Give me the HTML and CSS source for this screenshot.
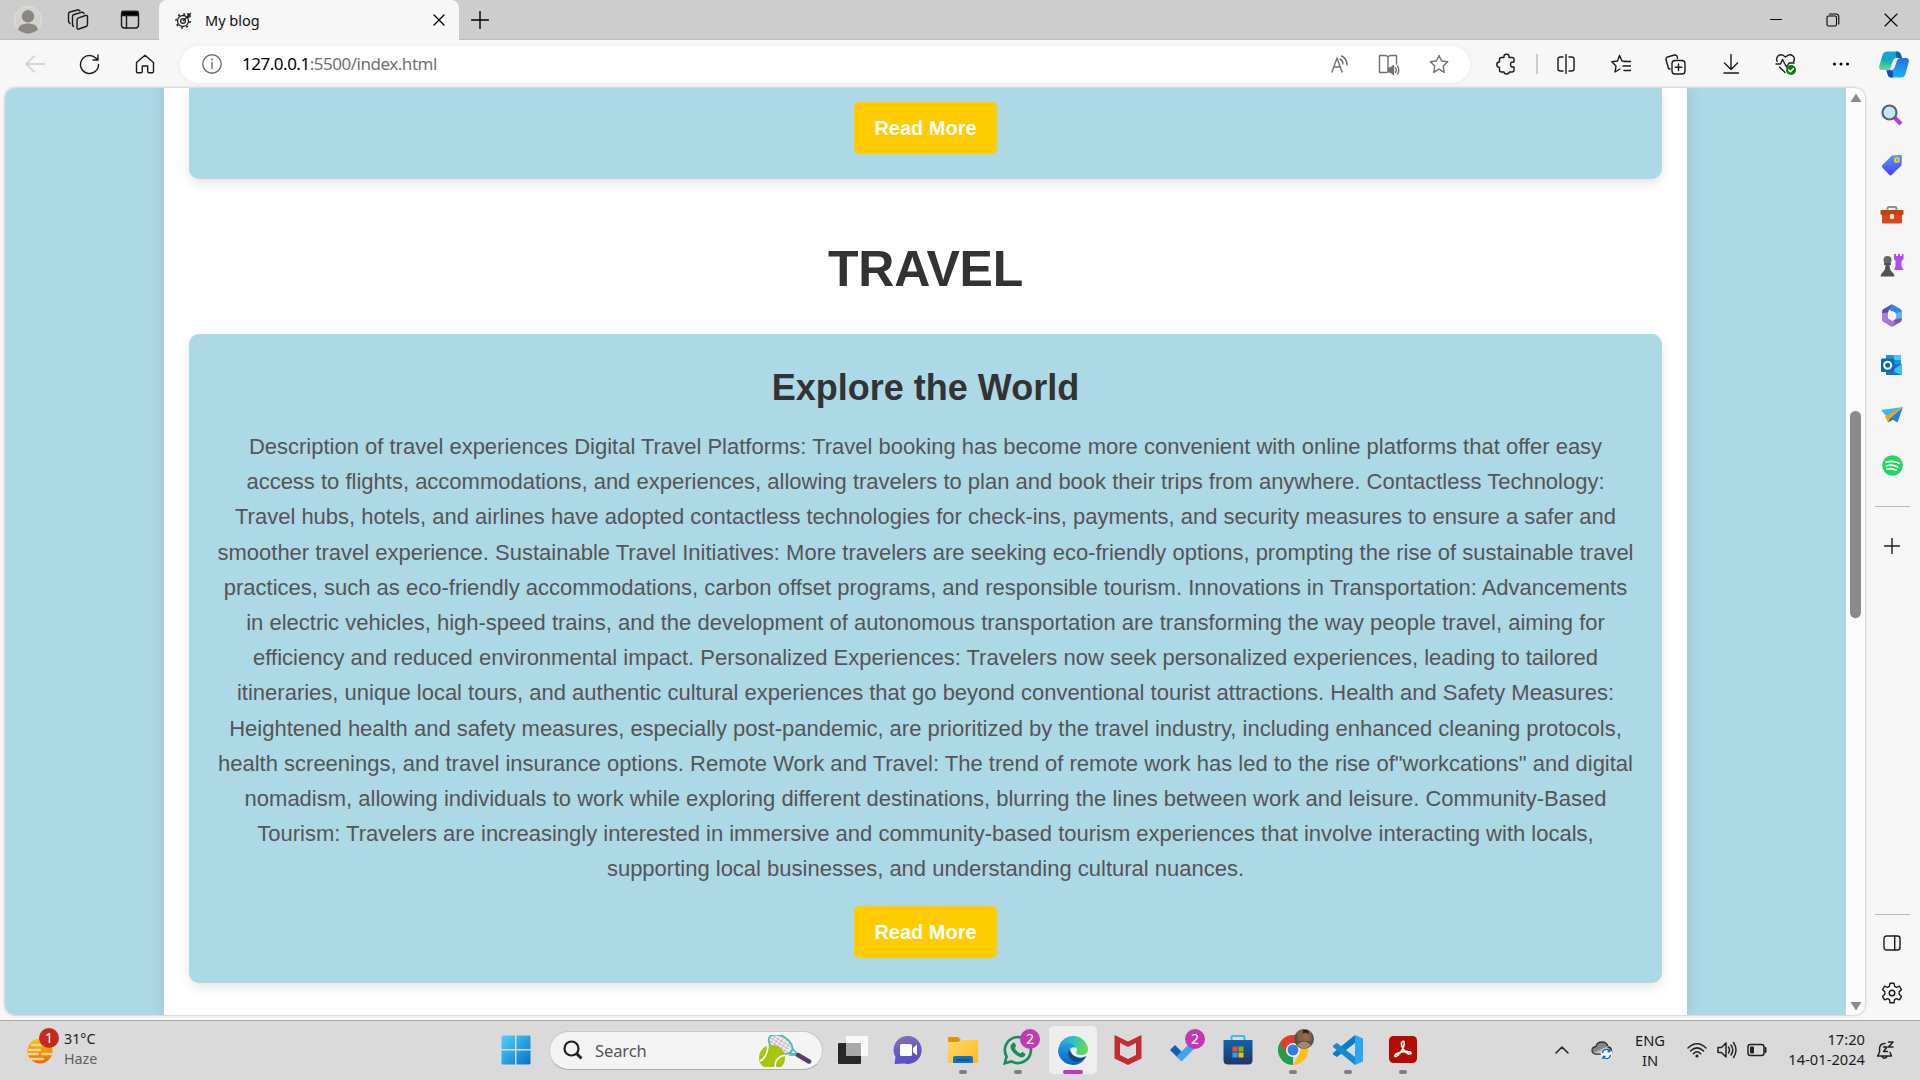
FILE: index.html
```html
<!DOCTYPE html>
<html lang="en">
<head>
<meta charset="utf-8">
<title>My blog</title>
<link rel="stylesheet" href="styles.css">
</head>
<body>
<header class="tabstrip">
  <div class="cell w56"><svg width="28" height="28" viewBox="0 0 28 28"><circle cx="14" cy="14" r="13.5" fill="#d4d1cd" stroke="#e2e0dd"/><circle cx="14" cy="10.3" r="6.2" fill="#8a8683"/><path d="M4 23.500C5 15.500 23 15.500 24 23.500 18 29 10 29 4 23.500z" fill="#8a8683"/></svg></div>
  <div class="cell w44"><svg class="line" width="22" height="22" viewBox="0 0 22 22"><path d="M11.500 8.800 18.500 6.500Q20.500 6 20.500 8V15.500Q20.500 17 19 17.500L12 20Q10 20.500 10 18.500V11Q10 9.400 11.500 8.800zM6.500 17.500 5.500 16V7.500Q5.500 6 7 5.500L14.500 3.300Q16.500 3 17 4.500M3 14.500 1.500 12.500V5Q1.500 3.500 3 3L10.500 1Q12 .8 13 2"/></svg></div>
  <div class="cell w60"><svg class="line" width="20" height="20" viewBox="0 0 20 20"><rect x="1.500" y="1.500" width="17" height="16.500" rx="3"/><path d="M2 1.500h16v4H2z" fill="#000"/><path d="M6.500 5v13"/></svg></div>
  <div class="tab">
    <svg class="favicon" width="18" height="18" viewBox="0 0 18 18" fill="none" stroke="#222"><circle cx="8" cy="10" r="5.500" stroke-width="1.300"/><circle cx="8" cy="10" r="7" stroke-width="1.600" stroke-dasharray="2 3.500"/><circle cx="8" cy="10" r="2.400" stroke-width="1.300"/><path d="M8 10 16 2M13 2v3h3" stroke-width="1.500"/></svg>
    <span class="tab-title">My blog</span>
    <svg class="line black" width="12" height="12" viewBox="0 0 12 12"><path d="M1 1 11 11M11 1 1 11"/></svg>
  </div>
  <div class="cell w42"><svg class="line black" width="18" height="18" viewBox="0 0 18 18"><path d="M9 .500V17.500M.500 9H17.500"/></svg></div>
  <div class="window-buttons">
    <svg class="line black" width="12" height="12" viewBox="0 0 12 12"><path d="M.5 5.500h11" stroke-width="1"/></svg>
    <svg class="line black" width="14" height="14" viewBox="0 0 14 14"><rect x="1" y="3" width="9.500" height="10" rx="1.500" stroke-width="1.100"/><path d="M3.500 1H10Q12.800 1 12.800 4V11" stroke-width="1.100"/></svg>
    <svg class="line black" width="14" height="14" viewBox="0 0 14 14"><path d="M1 1 13 13M13 1 1 13" stroke-width="1.100"/></svg>
  </div>
</header>

<nav class="toolbar">
  <div class="cell w55"><svg class="line pale" width="20" height="18" viewBox="0 0 20 18"><path d="M20 9H1M9.500 1 1 9 9.500 17"/></svg></div>
  <div class="cell w55"><svg class="line" width="21" height="21" viewBox="0 0 21 21"><path d="M19.500 10.500A9 9 0 1 1 16.600 3.900L19 6M19 1V6H14"/></svg></div>
  <div class="cell w55"><svg class="line" width="20" height="20" viewBox="0 0 20 20"><path d="M1.500 8.500 10 1.200 18.500 8.500V17.500Q18.500 18.800 17.200 18.800H14Q12.700 18.800 12.700 17.500V12H7.300V17.500Q7.300 18.800 6 18.800H2.800Q1.500 18.800 1.500 17.500z"/></svg></div>
  <div class="address">
    <svg class="line gray" width="20" height="20" viewBox="0 0 20 20"><circle cx="10" cy="10" r="9.200"/><path d="M10 8.500V14.500M10 5V6"/></svg>
    <span class="url"><b>127.0.0.1</b>:5500/index.html</span>
    <div class="address-actions">
      <div class="cell w50"><svg class="line gray" width="20" height="20" viewBox="0 0 20 20"><path d="M3 18 8 4 13 18M4.700 13H11.300M11 5Q14 6.500 14 10M12.500 2Q18 4.500 18 11"/></svg></div>
      <div class="cell w50"><svg class="line gray" width="22" height="21" viewBox="0 0 22 21"><path d="M10 3Q9 1.500 7 1.500H1.500V18.500H8Q9.500 18.500 10 17.500V3Q11 1.500 13 1.500H18.500V10"/><path d="M10.500 14H12.500L15.500 11.500V20.500L12.500 18H10.500z" fill="#707070"/><path d="M17.500 13.500Q19 16 17.500 18.500M19.500 12Q22 16 19.500 20"/></svg></div>
      <div class="cell w50"><svg class="line gray" width="20" height="20" viewBox="0 0 20 20"><path d="M10 1.500 12.600 7 18.700 7.800 14.200 12 15.300 18.300 10 15.200 4.700 18.300 5.800 12 1.300 7.800 7.400 7z"/></svg></div>
    </div>
  </div>
  <div class="actions">
    <div class="cell w60"><svg class="line" width="20" height="22" viewBox="0 0 20 22"><path d="M5.500 4.500H8Q7.500 1.200 10.500 1.200T13 4.500H16Q18 4.500 18 6.500V9Q14.500 8.500 14.500 11.500T18 14V17Q18 19 16 19H13.500Q13 21 10.500 21T8 19H5.500Q3.500 19 3.500 17V14.500Q.800 14 .800 11.500T3.500 9V6.500Q3.500 4.500 5.500 4.500z"/></svg></div>
    <div class="divider"></div>
    <div class="cell w55"><svg class="line" width="20" height="20" viewBox="0 0 20 20"><path d="M7 3H4.500Q2 3 2 5V15Q2 17 4.500 17H7M13 3H15.500Q18 3 18 5V15Q18 17 15.500 17H13M10 .500V19.500"/></svg></div>
    <div class="cell w55"><svg class="line" width="20" height="20" viewBox="0 0 20 20"><path d="M16 7.500 11 7 8.500 1.500 6.500 7 .8 7.800 5 12 4 18 9 15M13 7.500H20M12 12H20M13 16.500H20"/></svg></div>
    <div class="cell w55"><svg class="line" width="21" height="21" viewBox="0 0 21 21"><path d="M5 15 3.500 14.500 1 5.500Q.700 3.500 2.500 3L9.500 1Q11.500.700 12.200 2.500L12.500 4.500"/><rect x="7" y="6.500" width="13" height="13.500" rx="3"/><path d="M13.500 10V16.500M10.200 13.200H16.800"/></svg></div>
    <div class="cell w55"><svg class="line" width="16" height="20" viewBox="0 0 16 20"><path d="M8 .500V15M1.500 9 8 15.500 14.500 9M1 19H15.500"/></svg></div>
    <div class="cell w55"><svg class="line" width="22" height="22" viewBox="0 0 22 22"><path d="M2.200 8.500Q.700 5.500 3 3 6.500 0 10.500 4 14.500 0 18 3 20.300 5.500 18.800 8.500M1 11H5.500L7.500 6.500 11.500 14 14 10H19M4.500 14 10 19.500"/><circle cx="16" cy="17" r="5" fill="#0f7b14" stroke="none"/><path d="M13.700 17 15.500 18.800 18.500 15.500" stroke="#fff"/></svg></div>
    <div class="cell w55"><svg width="18" height="4" viewBox="0 0 18 4"><circle cx="2.500" cy="2" r="1.500"/><circle cx="9" cy="2" r="1.500"/><circle cx="15.500" cy="2" r="1.500"/></svg></div>
    <div class="cell w52"><svg width="30" height="27" viewBox="0 0 30 27"><defs><linearGradient id="cpa" x2="0" y2="1"><stop stop-color="#12a6e6"/><stop offset=".45" stop-color="#1aa5bb"/><stop offset="1" stop-color="#6bdc8a"/></linearGradient><linearGradient id="cpb" x2="0" y2="1"><stop stop-color="#2a6fdc"/><stop offset="1" stop-color="#17b2f8"/></linearGradient></defs><path d="M8 .500H18Q21 .500 22 4L23 7H18Q14.500 7 13.500 11L11 19H3Q-.500 19 .300 15L3.500 4Q4.500.500 8 .500z" fill="url(#cpa)"/><path d="M22 26.500H12Q9.500 26.500 8.500 23L7.500 19H12Q15 19 16 15.500L18 9.500Q18.800 7 21.500 7H27Q30.500 7 29.700 11L26.500 23Q25.500 26.500 22 26.500z" fill="url(#cpb)"/><path d="M17 .500H18Q21 .500 22 4L23 7H18.500Q16 5 17 .500z" fill="#125aa8"/><path d="M13.500 26.500H12Q9.500 26.500 8.500 23L7.500 19.500H13Q15 22 13.500 26.500z" fill="#1446cf"/></svg></div>
  </div>
</nav>

<div class="workspace">
  <div class="viewport">
    <div class="page">
      <main class="container">
        <section class="card card-top"><a class="button">Read More</a></section>
        <h1>TRAVEL</h1>
        <section class="card card-travel">
          <h2>Explore the World</h2>
          <p>Description of travel experiences Digital Travel Platforms: Travel booking has become more convenient with online platforms that offer easy access to flights, accommodations, and experiences, allowing travelers to plan and book their trips from anywhere. Contactless Technology: Travel hubs, hotels, and airlines have adopted contactless technologies for check-ins, payments, and security measures to ensure a safer and smoother travel experience. Sustainable Travel Initiatives: More travelers are seeking eco-friendly options, prompting the rise of sustainable travel practices, such as eco-friendly accommodations, carbon offset programs, and responsible tourism. Innovations in Transportation: Advancements in electric vehicles, high-speed trains, and the development of autonomous transportation are transforming the way people travel, aiming for efficiency and reduced environmental impact. Personalized Experiences: Travelers now seek personalized experiences, leading to tailored itineraries, unique local tours, and authentic cultural experiences that go beyond conventional tourist attractions. Health and Safety Measures: Heightened health and safety measures, especially post-pandemic, are prioritized by the travel industry, including enhanced cleaning protocols, health screenings, and travel insurance options. Remote Work and Travel: The trend of remote work has led to the rise of"workcations" and digital nomadism, allowing individuals to work while exploring different destinations, blurring the lines between work and leisure. Community-Based Tourism: Travelers are increasingly interested in immersive and community-based tourism experiences that involve interacting with locals, supporting local businesses, and understanding cultural nuances.</p>
          <a class="button">Read More</a>
        </section>
      </main>
    </div>
    <div class="scrollbar">
      <svg width="12" height="10" viewBox="0 0 12 10"><path d="M6 .5 11.500 9H.500z" fill="#8a8a8a"/></svg>
      <div class="thumb"></div>
      <svg class="down" width="12" height="10" viewBox="0 0 12 10"><path d="M6 9.500 11.500 1H.500z" fill="#8a8a8a"/></svg>
    </div>
  </div>
  <aside class="sidebar">
    <div class="side-item"><svg width="22" height="22" viewBox="0 0 22 22"><path d="M13.500 13.500 20 20" stroke="#b83af0" stroke-width="4"/><circle cx="8.500" cy="8.500" r="7" fill="#c4e5fa" stroke="#626262" stroke-width="2.200"/></svg></div>
    <div class="side-item"><svg width="22" height="22" viewBox="0 0 22 22"><defs><linearGradient id="tg" x2="0" y2="1"><stop stop-color="#5a9cf6"/><stop offset="1" stop-color="#4a3df0"/></linearGradient></defs><path d="M11 1.500 19.500.800Q21 .800 21 2.500L20.500 11.500 10.500 21Q9.500 21.800 8.500 21L1.200 13.500Q.200 12.500 1.200 11.300z" fill="url(#tg)"/><circle cx="15.800" cy="6" r="2" fill="#8b93a8" stroke="#f9d327" stroke-width="1.700"/></svg></div>
    <div class="side-item"><svg width="24" height="20" viewBox="0 0 24 20"><path d="M7.500 6V3.500Q7.500 2 9 2H15Q16.500 2 16.500 3.500V6" fill="none" stroke="#909090" stroke-width="1.800"/><path d="M2 8H22V17Q22 18.500 20.500 18.500H3.500Q2 18.500 2 17z" fill="#d7491c"/><path d="M.500 6Q.500 5 2 5H22Q23.500 5 23.500 6V8.500Q23.500 10 22 10H2Q.500 10 .500 8.500z" fill="#c2410c"/><rect x="10" y="9" width="4" height="5" rx="1" fill="#ddd"/></svg></div>
    <div class="side-item"><svg width="24" height="24" viewBox="0 0 24 24"><path d="M14 1H16V3H18V1H20V3H22V1H23.500V6L21.500 8V13L23.500 17H14L15.500 13V8L14 6z" fill="#b84af5"/><circle cx="7.500" cy="7" r="4" fill="#666"/><path d="M4 10H11V12H9.500Q9.500 17 12 19 14.500 21 14.500 23.500H.500Q.500 21 3 19 5.500 17 5.500 12H4z" fill="#525252"/></svg></div>
    <div class="side-item"><svg width="22" height="23" viewBox="0 0 22 23"><path d="M9.500 1Q11 0 12.500 1L19 4.700Q20.800 5.700 20.800 7.500V13L14.700 9.500 7 5z" fill="#2f8be0"/><path d="M20.800 7.500V15.500Q20.800 17.300 19 18.300L14.700 20.500V9.500z" fill="#68b3e6"/><path d="M20.800 14V15.500Q20.800 17.300 19 18.300L12.500 22Q11 22.800 9.500 22L7 20.500 14.700 15z" fill="#7b5aa6"/><path d="M7 14.500 14.500 18.500 11 22.500Q10.300 22.500 9.500 22L3 18.300Q1 17.300 1 15.500V13z" fill="#aa75cf"/><path d="M9.500 1Q10.300.500 11 .500L8 5.500 7 8.500V16L1 13.500V7.500Q1 5.700 3 4.700z" fill="#554eb5"/><path d="M1 9 7 8.500V17L3 18.300Q1 17.300 1 15.500z" fill="#a97edb"/><circle cx="11" cy="11.500" r="4.200" fill="#f7f7f7"/></svg></div>
    <div class="side-item"><svg width="22" height="22" viewBox="0 0 22 22"><path d="M5 1H20V12H5z" fill="#1b96dc"/><path d="M13 1H20V6H13z" fill="#4ccaf7"/><path d="M5 10H21V21H5z" fill="#1477c4"/><path d="M21 10 10 17 21 21z" fill="#3bc2f2"/><rect y="4.500" width="13.500" height="13.500" rx="1.500" fill="#0a69bd"/><circle cx="6.700" cy="11.200" r="3.500" fill="none" stroke="#fff" stroke-width="2"/></svg></div>
    <div class="side-item"><svg width="22" height="18" viewBox="0 0 22 18"><path d="M0 4 22 1 6 11z" fill="#3fb8ee"/><path d="M22 1 16.500 16.500 9 12z" fill="#2580df"/><path d="M22 1 4 10 7 16.500 9.500 12z" fill="#f1a21d"/><path d="M9.500 12 7 16.500 12 13.500z" fill="#1561b5"/></svg></div>
    <div class="side-item"><svg width="21" height="21" viewBox="0 0 21 21"><circle cx="10.500" cy="10.500" r="10.300" fill="#1ed760"/><path d="M4 7.200Q11 5 17 8.300M4.500 10.800Q10.500 9 15.700 12M5 14Q10 12.700 14.500 15.300" fill="none" stroke="#fff" stroke-width="1.800" stroke-linecap="round"/></svg></div>
    <div class="side-rule"></div>
    <div class="side-add"><svg class="line" width="16" height="16" viewBox="0 0 16 16"><path d="M8 .500V15.500M.500 8H15.500"/></svg></div>
    <div class="side-rule push"></div>
    <div class="side-item"><svg class="line" width="18" height="16" viewBox="0 0 18 16"><rect x="1" y="1" width="16" height="14" rx="2.500"/><path d="M11.700 1V15"/></svg></div>
    <div class="side-item"><svg class="line" width="22" height="22" viewBox="0 0 22 22"><path d="M9 1.200H13L13.600 4.300 15.400 5.300 18.400 4.200 20.400 7.700 18.200 9.800V12.200L20.400 14.300 18.400 17.800 15.400 16.700 13.600 17.700 13 20.800H9L8.400 17.700 6.600 16.700 3.600 17.800 1.600 14.300 3.800 12.200V9.800L1.600 7.700 3.600 4.200 6.600 5.300 8.400 4.300z"/><circle cx="11" cy="11" r="2.800"/></svg></div>
  </aside>
</div>

<footer class="taskbar">
  <div class="weather">
    <div class="weather-icon"><svg width="30" height="28" viewBox="0 0 30 28"><defs><linearGradient id="sun" x2="0" y2="1"><stop stop-color="#ffc505"/><stop offset="1" stop-color="#e66a0c"/></linearGradient></defs><circle cx="15" cy="14" r="12.500" fill="url(#sun)"/><path d="M7 8H20M4 13H15M1 17H13M17 17H26M1 22H18" stroke="#f1d496" stroke-width="2.300" stroke-linecap="round"/></svg><span class="badge alert">1</span></div>
    <div class="weather-text"><span>31°C</span><span class="muted">Haze</span></div>
  </div>
  <div class="apps">
    <div class="app start"><svg width="30" height="30" viewBox="0 0 30 30"><defs><linearGradient id="wn" x2="1" y2="1"><stop stop-color="#4fd3fb"/><stop offset="1" stop-color="#0670ce"/></linearGradient></defs><path d="M1.500.500H14V14H.500V1.500zM15.500.500H28.500L29.500 1.500V14H15.500zM.500 15.500H14V29.500H1.500L.500 28.500zM15.500 15.500H29.500V28.500L28.500 29.500H15.500z" fill="url(#wn)"/></svg></div>
    <div class="search">
      <svg width="20" height="20" viewBox="0 0 20 20" fill="none" stroke="#222" stroke-width="2.200"><circle cx="8.500" cy="8.500" r="7"/><path d="M13.500 13.500 18.500 18.500" stroke-width="3"/></svg>
      <span>Search</span>
      <svg class="tennis" width="54" height="33" viewBox="0 0 54 33"><g transform="rotate(32 22 10)"><ellipse cx="22" cy="9" rx="13" ry="8" fill="#f3edf5" stroke="#4dbab5" stroke-width="1.800"/><path d="M13 4V14M17 2V16M21 1V17M25 1V17M29 3V15M11 6H33M10 9H34M11 12H33" stroke="#b59fba" stroke-width=".600"/></g><path d="M34 13 40 20 31 20M32 18 40 20" fill="none" stroke="#4dbab5" stroke-width="1.600"/><path d="M40 20 51 26.500" stroke="#5d3d6c" stroke-width="4.500" stroke-linecap="round"/><path d="M1 23C1 15 7 10 14 10S27 15 27 23Q27 29 23 32H6Q1 29 1 23z" fill="#a6c50e"/><path d="M2 26Q9 23 10 11M17 32Q17 22 27 20" fill="none" stroke="#fff" stroke-width="1.700"/></svg>
    </div>
    <div class="app"><svg width="30" height="30" viewBox="0 0 30 30"><rect x="0" y="8" width="23" height="21" rx="1" fill="#282828"/><rect x="8" y="1" width="22" height="20" rx="1" fill="#fff" opacity=".82"/><path d="M8 8H23V21H8z" fill="#a9a9a9"/></svg></div>
    <div class="app"><svg width="30" height="30" viewBox="0 0 30 30"><defs><linearGradient id="ch" x2=".3" y2="1"><stop stop-color="#8a70b5"/><stop offset="1" stop-color="#554fc9"/></linearGradient></defs><path d="M15 1A14 14 0 1 1 11 28.500L1.500 29 2.500 22A14 14 0 0 1 15 1z" fill="url(#ch)"/><rect x="7" y="9" width="12" height="12" rx="1.500" fill="#fff"/><path d="M20 13 24 9.500V20.500L20 17z" fill="#fff"/></svg></div>
    <div class="app running"><svg width="30" height="30" viewBox="0 0 30 30"><defs><linearGradient id="fd" x2="1" y2="1"><stop stop-color="#ffd968"/><stop offset="1" stop-color="#fbba1d"/></linearGradient></defs><path d="M0 3Q0 2 1 2H10L13 5H20V9H0z" fill="#dc9800"/><path d="M0 7H10L13 5H29Q30 5 30 6V28H0z" fill="url(#fd)"/><path d="M5 28V23Q5 21 7 21H23Q25 21 25 23V28z" fill="#0875cd"/><path d="M8.500 25H21.500" stroke="#064d90" stroke-width="1.500"/></svg></div>
    <div class="app running"><svg width="30" height="30" viewBox="0 0 30 30"><path d="M1.800 28.200 3.600 21.500A13 13 0 1 1 8.500 26.400z" fill="none" stroke="#1f8a5b" stroke-width="2.700"/><path d="M9.500 8Q11 7 12 8.500L13.200 11 11.800 13Q13.500 17 17.500 18.500L19.300 17 22 18.500Q23 19.500 21.500 21.300 18 24.500 12 19T8 10z" fill="#1f8a5b"/></svg><span class="badge app-badge">2</span></div>
    <div class="app active"><svg width="30" height="30" viewBox="0 0 30 30"><defs><linearGradient id="ea" x2="1" y2=".2"><stop stop-color="#2a9fd5"/><stop offset=".5" stop-color="#2bc1c4"/><stop offset="1" stop-color="#62da55"/></linearGradient><linearGradient id="eb" x2="0" y2="1"><stop stop-color="#1fa3e5"/><stop offset="1" stop-color="#0a62c0"/></linearGradient></defs><path d="M1 11A15 15 0 0 1 30 14Q30 20 23 20 17 20 18.500 17 20 14 17 11 12 7 1 11z" fill="url(#ea)"/><path d="M0 15Q1 8 9 8 16 8 18 13 14 11 12 14 8 21 17 26 22 28 27 24 22 30 15 30A15 15 0 0 1 0 15z" fill="url(#eb)"/><path d="M12 14Q9 17 11 22 14 27 20 27 25 26.500 28 22 29 20.500 26 22 21 24 16.500 21 12 18 12 14z" fill="#114a8b"/></svg></div>
    <div class="app"><svg width="28" height="30" viewBox="0 0 28 30"><path d="M.5 0 14 6.500 27.500 0V23.500L14 30 .500 23.500zM6 8V20L14 24 22 20V8L14 12z" fill="#c12d31" fill-rule="evenodd"/></svg></div>
    <div class="app"><svg width="30" height="30" viewBox="0 0 30 30"><path d="M2 15 7 10 15 18 10 23z" fill="#1a5bbb"/><path d="M8.500 21.500 23 7 28 12 13.500 26.500z" fill="#41a5ee"/></svg><span class="badge app-badge">2</span></div>
    <div class="app"><svg width="30" height="30" viewBox="0 0 30 30"><defs><linearGradient id="st" x2="0" y2="1"><stop stop-color="#1263b0"/><stop offset="1" stop-color="#203764"/></linearGradient></defs><path d="M8.500 6V2Q8.500 1 9.500 1H20.500Q21.500 1 21.500 2V6" fill="none" stroke="#2fc1ee" stroke-width="2"/><path d="M.500 5H29.500V25Q29.500 29.500 25 29.500H5Q.500 29.500 .500 25z" fill="url(#st)"/><path d="M9.500 11.500H14.500V16.500H9.500z" fill="#f25022"/><path d="M15.500 11.500H20.500V16.500H15.500z" fill="#7fba00"/><path d="M9.500 17.500H14.500V22.500H9.500z" fill="#22a8ee"/><path d="M15.500 17.500H20.500V22.500H15.500z" fill="#ffb900"/></svg></div>
    <div class="app running"><svg width="30" height="30" viewBox="0 0 30 30"><path d="M15 15 15 30A15 15 0 0 1 2 7.500z" fill="#269b49"/><path d="M15 15 28 7.500A15 15 0 0 1 15 30L21.500 18.500z" fill="#fbc116"/><path d="M15 8H28.300A15 15 0 0 0 2 7.500L8.900 18.500z" fill="#e33b2e"/><circle cx="15" cy="15" r="7" fill="#fff"/><circle cx="15" cy="15" r="5.500" fill="#2f7cf0"/></svg><svg class="profile" width="20" height="20" viewBox="0 0 20 20"><circle cx="10" cy="10" r="10" fill="#5e5140"/><path d="M3 3Q10-2 17 3L18 12H4z" fill="#79664d"/><ellipse cx="12" cy="7" rx="3.600" ry="5" fill="#aa6149"/><path d="M3 16Q10 9 17 16 10 23 3 16z" fill="#a08774"/><path d="M9 5Q12 2 15 6L14 1H9z" fill="#2f211c"/></svg></div>
    <div class="app running"><svg width="30" height="30" viewBox="0 0 30 30"><path d="M22 0 30 3.500V26.500L22 30z" fill="#29a6f4"/><path d="M22 0V8L4 22 0 19.500V18z" fill="#087bc9"/><path d="M0 12V10.500L4 8 22 22V30z" fill="#168ad6"/></svg></div>
    <div class="app running"><svg width="30" height="30" viewBox="0 0 30 30"><rect x="1" y="1" width="28" height="27" rx="4.500" fill="#b30b00"/><path d="M14 7Q17 4.500 16 10 15 16 8.500 21.500 5 22 8 19 15 15 22 17 25 19 20.500 19 15 16 13.500 10 13 8 14 7z" fill="none" stroke="#fff" stroke-width="1.600"/></svg></div>
  </div>
  <div class="tray">
    <div class="cell w40"><svg class="line dark" width="14" height="8" viewBox="0 0 14 8"><path d="M1 7 7 1 13 7"/></svg></div>
    <div class="cell w40"><svg width="22" height="20" viewBox="0 0 22 20"><path d="M4 14Q1 13 1 10.500 1 7 5 6.500 6 2 11 2T17 7Q20.500 7 20.500 11V14z" fill="#858585" stroke="#333" stroke-width="1.300"/><path d="M2 13 17 6 14 14z" fill="#bcbcbc"/><circle cx="15.500" cy="14" r="5.800" fill="#f5f5f5"/><path d="M11.500 13A4 4 0 0 1 19 11.500V9M19 11.500H16.500M19.500 15A4 4 0 0 1 12 16.500V19M12 16.500H14.500" fill="none" stroke="#0b66bd" stroke-width="1.300"/></svg></div>
    <div class="lang"><span>ENG</span><span>IN</span></div>
    <div class="status">
      <svg class="line dark" width="20" height="16" viewBox="0 0 20 16"><path d="M1 6Q10-2.500 19 6M3.500 9Q10 2.700 16.500 9M6.300 11.700Q10 8 13.700 11.700"/><circle cx="10" cy="14" r="1.600" fill="#222" stroke="none"/></svg>
      <svg class="line dark" width="20" height="18" viewBox="0 0 20 18"><path d="M1 6.500H4.500L9 2V16L4.500 11.500H1zM11.500 6Q13.500 9 11.500 12M14 4Q17.500 9 14 14M16.500 1.500Q21.500 9 16.500 16.500"/></svg>
      <svg class="line dark" width="20" height="14" viewBox="0 0 20 14"><rect x="1" y="1.500" width="16" height="11" rx="2.500"/><rect x="3" y="3.500" width="4" height="7" rx="1" fill="#222" stroke="none"/><path d="M18.500 5V9" stroke-width="2"/></svg>
    </div>
    <div class="clock"><span>17:20</span><span>14-01-2024</span></div>
    <svg class="line dark bell" width="19" height="19" viewBox="0 0 19 19"><path d="M9 2.500Q3.500 2.500 3.500 8V11.500L1.500 15H15.500L14 11.500M6 15.500Q8.500 19 11 15.500M7.500 6H11L7.500 10.500H11.500M12.500 1H17L12.500 6H17"/></svg>
  </div>
</footer>
</body>
</html>
```
FILE: styles.css
```css
* { box-sizing: border-box; }
body {
  margin: 0;
  width: 1920px;
  height: 1080px;
  overflow: hidden;
  display: flex;
  flex-direction: column;
  background: #f7f7f7;
  font-family: "Noto Sans", "Open Sans", sans-serif;
}
svg { display: block; flex: none; }
.line { fill: none; stroke: #1b1b1b; stroke-width: 1.4; stroke-linejoin: round; stroke-linecap: round; }
.black { stroke: #000; }
.gray { stroke: #707070; }
.pale { stroke: #ccc; }
.dark { stroke: #222; stroke-width: 1.5; }
.cell { flex: none; display: flex; align-items: center; justify-content: center; }
.w40 { width: 40px; }
.w42 { width: 42px; }
.w44 { width: 44px; }
.w50 { width: 50px; }
.w52 { width: 52px; }
.w55 { width: 55px; }
.w56 { width: 56px; }
.w60 { width: 60px; }

/* Tab strip */
.tabstrip { flex: none; height: 40px; display: flex; background: #cdcdcd; box-shadow: inset 0 -1px 1px #bbb; }
.tab {
  width: 300px;
  margin-left: -1px;
  padding: 0 14px 0 16px;
  display: flex;
  align-items: center;
  background: #f7f7f7;
  border-radius: 8px 8px 0 0;
}
.tab-title { flex: 1; margin-left: 12px; padding-bottom: 1px; font-size: 14.5px; color: #111; }
.window-buttons { margin-left: auto; padding: 0 22px 1px 0; display: flex; align-items: center; gap: 44px; }

/* Toolbar */
.toolbar { flex: none; height: 48px; padding-left: 7px; display: flex; align-items: center; }
.address {
  width: 1290px;
  height: 37px;
  margin-left: 8px;
  padding: 0 6px 0 22px;
  display: flex;
  align-items: center;
  background: #fff;
  border-radius: 19px;
  box-shadow: 0 0 5px rgba(0, 0, 0, .07);
}
.url { margin-left: 20px; padding-bottom: 2px; font-size: 17px; letter-spacing: -.48px; color: #707070; }
.url b { font-weight: 400; color: #000; }
.address-actions { margin-left: auto; display: flex; }
.actions { display: flex; align-items: center; margin-left: 6px; }
.divider { width: 2px; height: 20px; background: #ccc; }

/* Web page and sidebar */
.workspace { flex: none; height: 932px; display: flex; align-items: flex-start; }
.viewport {
  width: 1860px;
  height: 927px;
  margin-left: 5px;
  display: flex;
  overflow: hidden;
  border-radius: 10px;
  background: #fcfcfc;
  box-shadow: 0 0 3px rgba(0, 0, 0, .3);
}
.page { width: 1841px; padding: 0 159px; background: #add8e6; overflow: hidden; font-family: "Liberation Sans", Arial, sans-serif; }
.container { height: 927px; padding: 0 25px; background: #fff; box-shadow: 0 0 15px rgba(0, 0, 0, .12); text-align: center; }
.card { background: #add8e6; border-radius: 10px; box-shadow: 0 5px 12px rgba(0, 0, 0, .1); padding: 0 25px; display: flex; flex-direction: column; align-items: center; }
.card-top { height: 91px; padding-top: 14px; border-radius: 0 0 10px 10px; }
.card-travel { height: 649px; }
.button { height: 52px; padding: 0 20px; line-height: 52px; border-radius: 5px; background: #fc0; color: #fff; font-size: 20px; font-weight: 700; }
h1 { margin: 62px 0 36px; font-size: 50px; line-height: 57px; letter-spacing: -.2px; color: #333; }
h2 { margin: 33px 0 20px; font-size: 36px; line-height: 42px; color: #333; }
p { margin: 0 0 19px; font-size: 22px; line-height: 35.2px; color: #555; }
.scrollbar { width: 19px; padding: 5px 4px 4px; display: flex; flex-direction: column; align-items: center; }
.thumb { width: 11px; height: 207px; margin-top: 308px; background: #8b8b8b; border-radius: 6px; }
.down { margin-top: auto; }
.sidebar { width: 54px; height: 932px; padding-top: 2px; display: flex; flex-direction: column; align-items: center; }
.side-item { height: 50px; display: flex; align-items: center; }
.side-rule { width: 35px; height: 1px; margin-top: 16px; background: #bbb; }
.side-add { margin-top: 31px; }
.push { margin-top: auto; margin-bottom: 3px; }
.sidebar .side-item:last-child { margin-bottom: 2px; }

/* Taskbar */
.taskbar { flex: none; height: 60px; display: flex; align-items: center; background: #dadada; border-top: 1px solid #aaa; }
.weather { width: 489px; padding-left: 25px; display: flex; align-items: center; }
.weather-icon { position: relative; }
.weather-text { margin-left: 9px; padding-bottom: 3px; display: flex; flex-direction: column; font-size: 14.3px; line-height: 20px; color: #222; }
.weather-text .muted { color: #606060; }
.badge { position: absolute; width: 20px; height: 20px; border-radius: 50%; color: #fff; font-size: 14px; line-height: 20px; text-align: center; }
.alert { left: 14px; top: -9px; background: #c42b1c; }
.app-badge { right: 5px; top: 3px; background: #c239b3; }
.apps { display: flex; align-items: center; padding-bottom: 1px; }
.app { width: 55px; height: 48px; display: flex; align-items: center; justify-content: center; position: relative; }
.start { width: 54px; }
.search {
  width: 274px;
  height: 39px;
  margin: 0 2px 0 6px;
  padding: 0 10px 0 13px;
  display: flex;
  align-items: center;
  border: 1px solid #c8c8c8;
  border-bottom-color: #aaa;
  border-radius: 20px;
  background: #f4f4f4;
  font-size: 16.5px;
  letter-spacing: -.1px;
  color: #555;
}
.search span { margin-left: 12px; }
.tennis { margin-left: auto; margin-top: 2px; }
.running::after { content: ""; position: absolute; left: 24px; bottom: 0; width: 8px; height: 4px; border-radius: 2px; background: #808080; }
.active { width: 48px; margin: 0 3.5px; border-radius: 5px; background: #eee; }
.active::after { content: ""; position: absolute; left: 14px; bottom: 0; width: 20px; height: 4px; border-radius: 2px; background: #c239b3; }
.profile { position: absolute; right: 6px; top: 3px; }
.tray { margin-left: auto; padding: 0 25px 1px 0; display: flex; align-items: center; color: #1c1c1c; font-size: 14.7px; line-height: 20px; }
.lang { width: 56px; padding-bottom: 1px; display: flex; flex-direction: column; align-items: center; }
.status { margin-left: 9px; display: flex; align-items: center; gap: 10px; }
.clock { width: 98px; padding-bottom: 3px; display: flex; flex-direction: column; align-items: flex-end; }
.bell { margin-left: 11px; }
```
